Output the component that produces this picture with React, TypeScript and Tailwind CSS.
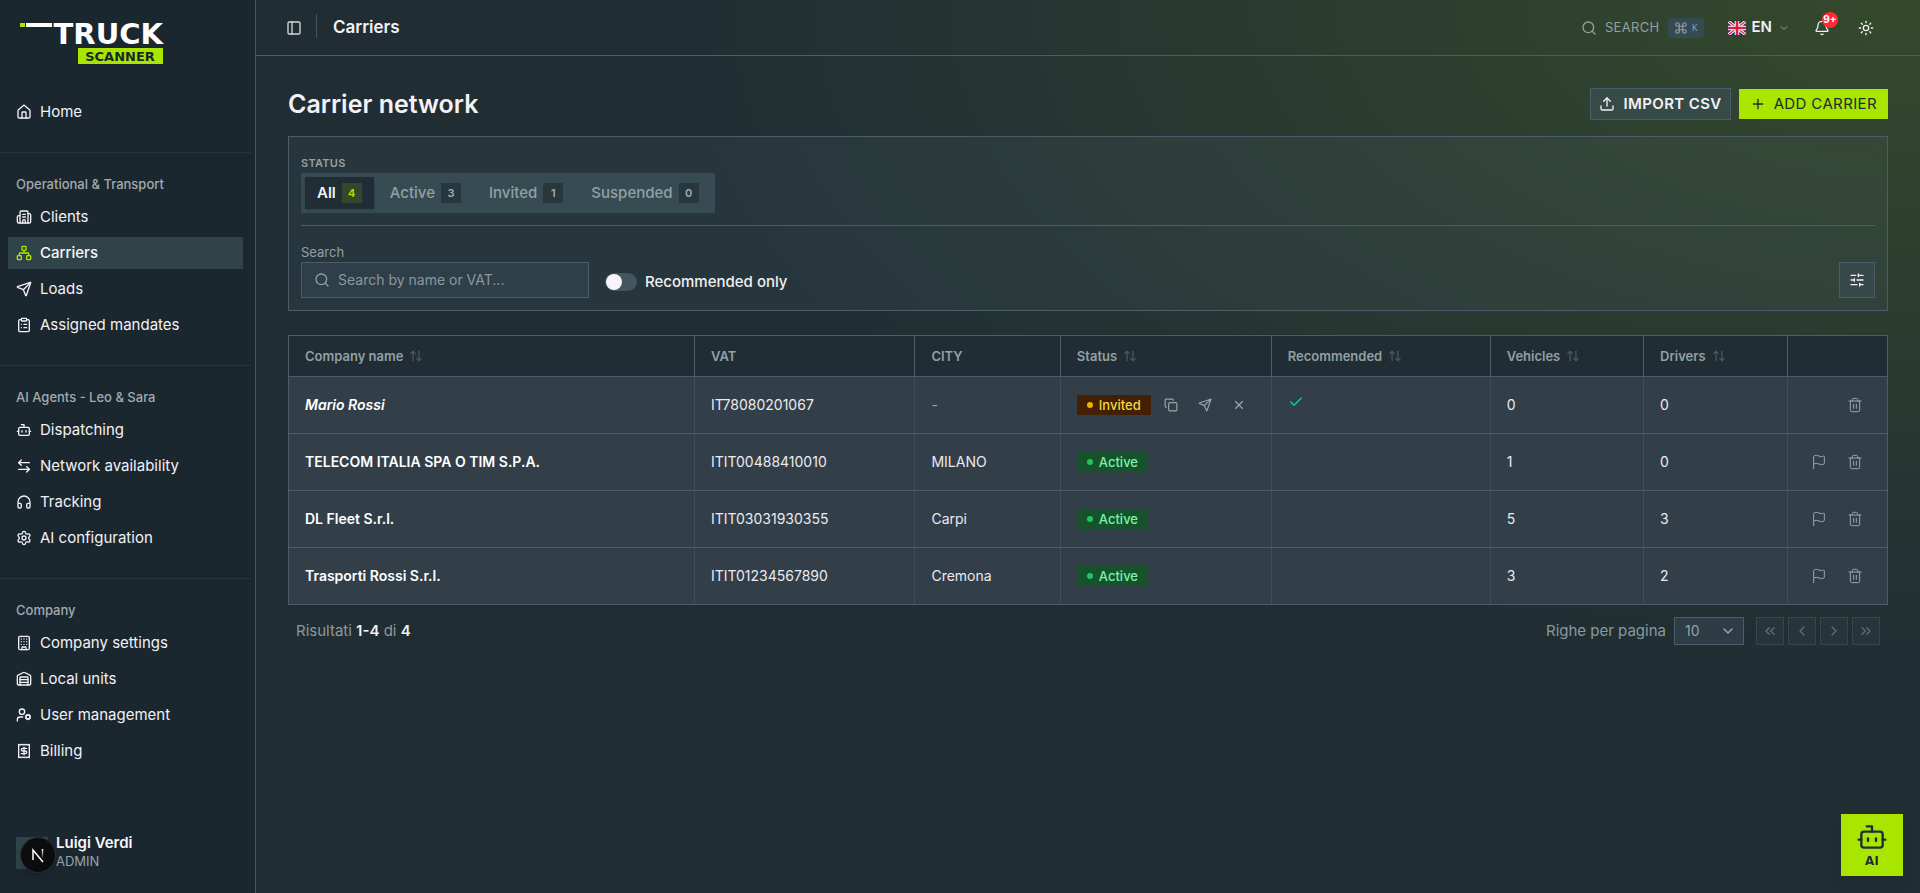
import { useState } from 'react';
import type { ReactNode } from 'react';
import {
    ArrowLeftRight,
    ArrowUpDown,
    Bell,
    Bot,
    Building,
    Building2,
    Check,
    ChevronDown,
    ChevronLeft,
    ChevronRight,
    ChevronsLeft,
    ChevronsRight,
    ClipboardList,
    Command,
    Copy,
    Flag,
    Headphones,
    House,
    Network,
    PanelLeft,
    Plus,
    Receipt,
    Search,
    Send,
    Settings,
    SlidersHorizontal,
    Sun,
    Trash2,
    Upload,
    UserCog,
    Warehouse,
    X,
} from 'lucide-react';
import type { LucideIcon } from 'lucide-react';

interface NavItem {
    label: string;
    icon: LucideIcon;
    active?: boolean;
}

interface NavGroup {
    title?: string;
    items: NavItem[];
}

interface Carrier {
    name: string;
    vat: string;
    city: string;
    status: 'Invited' | 'Active';
    recommended: boolean;
    vehicles: number;
    drivers: number;
}

const NAV: NavGroup[] = [
    { items: [{ label: 'Home', icon: House }] },
    {
        title: 'Operational & Transport',
        items: [
            { label: 'Clients', icon: Building2 },
            { label: 'Carriers', icon: Network, active: true },
            { label: 'Loads', icon: Send },
            { label: 'Assigned mandates', icon: ClipboardList },
        ],
    },
    {
        title: 'AI Agents - Leo & Sara',
        items: [
            { label: 'Dispatching', icon: Bot },
            { label: 'Network availability', icon: ArrowLeftRight },
            { label: 'Tracking', icon: Headphones },
            { label: 'AI configuration', icon: Settings },
        ],
    },
    {
        title: 'Company',
        items: [
            { label: 'Company settings', icon: Building },
            { label: 'Local units', icon: Warehouse },
            { label: 'User management', icon: UserCog },
            { label: 'Billing', icon: Receipt },
        ],
    },
];

const TABS = [
    { label: 'All', count: 4 },
    { label: 'Active', count: 3 },
    { label: 'Invited', count: 1 },
    { label: 'Suspended', count: 0 },
];

const COLUMNS = [
    { label: 'Company name', sortable: true, width: 'w-[25.4%]' },
    { label: 'VAT', sortable: false, width: 'w-[13.8%]' },
    { label: 'CITY', sortable: false, width: 'w-[9.1%]' },
    { label: 'Status', sortable: true, width: 'w-[13.2%]' },
    { label: 'Recommended', sortable: true, width: 'w-[13.7%]' },
    { label: 'Vehicles', sortable: true, width: 'w-[9.6%]' },
    { label: 'Drivers', sortable: true, width: 'w-[9%]' },
    { label: '', sortable: false, width: 'w-[6.2%]' },
];

const CARRIERS: Carrier[] = [
    { name: 'Mario Rossi', vat: 'IT78080201067', city: '-', status: 'Invited', recommended: true, vehicles: 0, drivers: 0 },
    { name: 'TELECOM ITALIA SPA O TIM S.P.A.', vat: 'ITIT00488410010', city: 'MILANO', status: 'Active', recommended: false, vehicles: 1, drivers: 0 },
    { name: 'DL Fleet S.r.l.', vat: 'ITIT03031930355', city: 'Carpi', status: 'Active', recommended: false, vehicles: 5, drivers: 3 },
    { name: 'Trasporti Rossi S.r.l.', vat: 'ITIT01234567890', city: 'Cremona', status: 'Active', recommended: false, vehicles: 3, drivers: 2 },
];

function Logo() {
    return (
        <svg width="147" height="48" viewBox="0 0 147 48" className="block overflow-visible" role="img" aria-label="Truck Scanner">
            <rect x="4" y="7" width="5" height="4" fill="#a8e600" />
            <rect x="10" y="7" width="26" height="4" fill="#fff" />
            <text x="147" y="28" textAnchor="end" fill="#fff" fontFamily="DejaVu Sans, sans-serif" fontWeight="700" fontSize="29">
                TRUCK
            </text>
            <rect x="62" y="32" width="85" height="16" fill="#a8e600" />
            <text x="104" y="45" textAnchor="middle" fill="#1b272f" fontFamily="DejaVu Sans, sans-serif" fontWeight="700" fontSize="13">
                SCANNER
            </text>
        </svg>
    );
}

function Sidebar() {
    return (
        <aside className="flex w-64 shrink-0 flex-col border-r border-[#45565f] bg-[#1b272f]">
            <div className="h-20 px-4 pt-4">
                <Logo />
            </div>
            <nav className="mr-1 flex flex-col">
                {NAV.map((group, i) => (
                    <div
                        key={group.title ?? 'root'}
                        className={i === NAV.length - 1 ? 'px-2 pt-4 pb-6' : 'border-b border-[#27343b] px-2 pt-4 pb-6'}
                    >
                        {group.title && (
                            <h2 className="flex h-8 items-center px-2 text-[13px] font-medium text-[#a3aaae]">{group.title}</h2>
                        )}
                        <ul className="flex flex-col gap-1">
                            {group.items.map(({ label, icon: Icon, active }) => (
                                <li key={label}>
                                    <a
                                        href="#"
                                        className={
                                            active
                                                ? 'flex h-8 items-center gap-2 bg-[#2f4349] px-2 text-[15px] font-medium text-[#f8f6fb]'
                                                : 'flex h-8 items-center gap-2 px-2 text-[15px] text-[#f3f1f6]'
                                        }
                                    >
                                        <Icon className={active ? 'size-4 text-[#a8e600]' : 'size-4'} />
                                        {label}
                                    </a>
                                </li>
                            ))}
                        </ul>
                    </div>
                ))}
            </nav>
            <div className="relative mt-auto flex items-center gap-2 px-4 pb-[22px]">
                <div className="size-8 bg-[#2f4349]" />
                <div className="flex flex-col">
                    <span className="text-[15px] leading-4 font-semibold text-[#f8f6fb]">Luigi Verdi</span>
                    <span className="text-[13px] leading-5 text-[#9aa2a6]">ADMIN</span>
                </div>
                <button
                    type="button"
                    aria-label="Open developer tools"
                    className="absolute bottom-5 left-5 flex size-9 items-center justify-center rounded-full border border-[#2d2f31] bg-[#0a0c0e] shadow-lg"
                >
                    <svg width="16" height="16" viewBox="0 0 16 16" fill="none">
                        <defs>
                            <linearGradient id="fade" x1="0" y1="2" x2="0" y2="12" gradientUnits="userSpaceOnUse">
                                <stop stopColor="#fff" />
                                <stop offset="1" stopColor="#fff" stopOpacity="0" />
                            </linearGradient>
                        </defs>
                        <path d="M3 13V3l10 12" stroke="#fff" strokeWidth="1.5" />
                        <path d="M12.500 2v9" stroke="url(#fade)" strokeWidth="1.5" />
                    </svg>
                </button>
            </div>
        </aside>
    );
}

function UkFlag() {
    return (
        <svg width="18" height="14" viewBox="0 0 18 14">
            <rect width="18" height="14" fill="#1f2f7a" />
            <path d="M0 0 18 14M18 0 0 14" stroke="#fff" strokeWidth="3" />
            <path d="M0 0 18 14M18 0 0 14" stroke="#d8203f" strokeWidth="1.200" />
            <path d="M9 0v14M0 7h18" stroke="#fff" strokeWidth="4.600" />
            <path d="M9 0v14M0 7h18" stroke="#d8203f" strokeWidth="2.600" />
        </svg>
    );
}

function Topbar() {
    return (
        <header className="flex h-14 items-center border-b border-[#4a5d69] pr-[46px] pl-[30px]">
            <button type="button" aria-label="Toggle sidebar" className="text-[#d6d8dc]">
                <PanelLeft className="size-4" />
            </button>
            <div className="mt-[14px] ml-[14px] h-6 w-px self-start bg-[#45565f]" />
            <h1 className="ml-4 text-[17px] font-semibold text-[#f4f1f7]">Carriers</h1>
            <div className="ml-auto flex items-center">
                <button type="button" className="flex items-center text-[#93a0a3]">
                    <Search className="size-4" />
                    <span className="ml-2 text-[13px] tracking-wide">SEARCH</span>
                    <kbd className="ml-2 flex h-5 w-9 items-center justify-center gap-1 rounded bg-[#344a54] font-sans text-[9px] text-[#93a0a3]">
                        <Command className="size-[14px]" />K
                    </kbd>
                </button>
                <button type="button" className="ml-6 flex items-center text-[15px] font-semibold text-[#f1eff4]">
                    <UkFlag />
                    <span className="ml-[6px]">EN</span>
                    <ChevronDown className="ml-[6px] size-3 text-[#93a0a3]" />
                </button>
                <button type="button" aria-label="Notifications" className="relative ml-6 text-[#f1eff4]">
                    <Bell className="size-4" />
                    <span className="absolute -top-2 left-2 flex size-4 items-center justify-center rounded-full bg-[#fb2c36] text-[10px] font-bold text-white">
                        9+
                    </span>
                </button>
                <button type="button" aria-label="Toggle theme" className="ml-7 text-[#f1eff4]">
                    <Sun className="size-4" />
                </button>
            </div>
        </header>
    );
}

function Filters() {
    const [tab, setTab] = useState('All');

    return (
        <section className="border border-[#4a5d69] bg-[#5a7480]/12 p-3">
            <div className="border-b border-[#4a5d69] pt-1 pb-3">
                <h3 className="text-[11px] leading-5 font-semibold tracking-wide text-[#93a0a3]">STATUS</h3>
                <div className="flex h-10 w-fit gap-1 bg-[#364c52] p-1">
                    {TABS.map(({ label, count }) => {
                        const on = tab === label;
                        return (
                            <button
                                key={label}
                                type="button"
                                onClick={() => setTab(label)}
                                className={
                                    on
                                        ? 'flex items-center gap-[6px] bg-[#202d34] px-3 text-[15px] font-semibold text-[#f4f1f7] shadow-sm'
                                        : 'flex items-center gap-[6px] px-3 text-[15px] font-medium text-[#93a0a3]'
                                }
                            >
                                {label}
                                <span
                                    className={
                                        on
                                            ? 'flex size-5 items-center justify-center bg-[#35462c] text-[11px] font-semibold text-[#a8e600]'
                                            : 'flex size-5 items-center justify-center bg-[#28373e] text-[11px] font-semibold text-[#a3adb0]'
                                    }
                                >
                                    {count}
                                </span>
                            </button>
                        );
                    })}
                </div>
            </div>
            <div className="flex items-end justify-between pt-4">
                <div className="flex items-end gap-4">
                    <div className="flex w-72 flex-col">
                        <label htmlFor="carrier-search" className="text-[13px] leading-5 text-[#93a0a3]">
                            Search
                        </label>
                        <div className="flex h-9 items-center gap-2 border border-[#4a5d69] bg-[#2f3f49] px-3">
                            <Search className="size-4 shrink-0 text-[#93a0a3]" />
                            <input
                                id="carrier-search"
                                type="text"
                                placeholder="Search by name or VAT..."
                                className="min-w-0 flex-1 bg-transparent text-sm text-[#f4f1f7] outline-none placeholder:text-[#8b989d]"
                            />
                        </div>
                    </div>
                    <label className="flex h-8 items-center gap-2 text-[15px] font-medium text-[#f1eff4]">
                        <input
                            type="checkbox"
                            role="switch"
                            className="flex h-[18px] w-8 appearance-none items-center rounded-full bg-[#43555f] px-px before:size-4 before:rounded-full before:bg-[#f8f4fb] checked:justify-end checked:bg-[#a8e600]"
                        />
                        Recommended only
                    </label>
                </div>
                <button
                    type="button"
                    aria-label="Table options"
                    className="flex size-9 items-center justify-center border border-[#4a5d69] bg-[#364848] text-[#f1eff4]"
                >
                    <SlidersHorizontal className="size-4" />
                </button>
            </div>
        </section>
    );
}

function StatusBadge({ status }: { status: Carrier['status'] }) {
    return status === 'Invited' ? (
        <span className="flex h-5 items-center gap-[6px] bg-[#432004] px-[10px] text-[13px] font-medium text-[#f5d63a]">
            <span className="size-[6px] rounded-full bg-[#f0b100]" />
            Invited
        </span>
    ) : (
        <span className="flex h-5 items-center gap-[6px] bg-[#16532d] px-[10px] text-[13px] font-medium text-[#7bf1a8]">
            <span className="size-[6px] rounded-full bg-[#22c55e]" />
            Active
        </span>
    );
}

function IconButton({ label, children }: { label: string; children: ReactNode }) {
    return (
        <button type="button" aria-label={label} className="flex size-7 items-center justify-center text-[#9aa6ab]">
            {children}
        </button>
    );
}

function CarrierTable() {
    return (
        <div className="mt-6 border border-[#4a5d69]">
            <table className="w-full table-fixed border-separate border-spacing-0 text-left text-sm">
                <thead className="bg-[#202d34]">
                    <tr>
                        {COLUMNS.map(({ label, sortable, width }) => (
                            <th
                                key={label}
                                className={`${width} h-[41px] border-r border-b border-[#4a5d69] px-4 text-[13px] font-semibold text-[#93a0a3] last:border-r-0`}
                            >
                                <span className="flex items-center gap-[6px]">
                                    {label}
                                    {sortable && <ArrowUpDown className="size-[14px] text-[#4d5b62]" />}
                                </span>
                            </th>
                        ))}
                    </tr>
                </thead>
                <tbody className="bg-[#323f49] text-[#eceaf0] [&_td]:h-[57px] [&_td]:border-r [&_td]:border-b [&_td]:border-r-[#3f4f59] [&_td]:border-b-[#4a5d69] [&_td]:px-4 [&_td:last-child]:border-r-0 [&_tr:last-child_td]:h-14 [&_tr:last-child_td]:border-b-0">
                    {CARRIERS.map((c) => {
                        const invited = c.status === 'Invited';
                        return (
                            <tr key={c.vat}>
                                <td className={invited ? 'font-semibold text-white italic' : 'font-semibold text-white'}>{c.name}</td>
                                <td>{c.vat}</td>
                                <td className={c.city === '-' ? 'text-[#93a0a3]' : ''}>{c.city}</td>
                                <td>
                                    <div className="flex items-center gap-[6px]">
                                        <StatusBadge status={c.status} />
                                        {invited && (
                                            <>
                                                <IconButton label="Copy invite link">
                                                    <Copy className="size-[14px]" />
                                                </IconButton>
                                                <IconButton label="Resend invite">
                                                    <Send className="size-[14px]" />
                                                </IconButton>
                                                <IconButton label="Cancel invite">
                                                    <X className="size-[14px]" />
                                                </IconButton>
                                            </>
                                        )}
                                    </div>
                                </td>
                                <td>{c.recommended && <Check className="mb-[6px] size-4 text-[#00d492]" />}</td>
                                <td>{c.vehicles}</td>
                                <td>{c.drivers}</td>
                                <td>
                                    <div className="flex justify-end gap-2 pr-[2px]">
                                        {!invited && (
                                            <IconButton label="Flag carrier">
                                                <Flag className="size-4" strokeWidth={1.5} />
                                            </IconButton>
                                        )}
                                        <IconButton label="Delete carrier">
                                            <Trash2 className="size-4" strokeWidth={1.5} />
                                        </IconButton>
                                    </div>
                                </td>
                            </tr>
                        );
                    })}
                </tbody>
            </table>
        </div>
    );
}

function Pagination() {
    const pages = [
        { label: 'First page', icon: ChevronsLeft },
        { label: 'Previous page', icon: ChevronLeft },
        { label: 'Next page', icon: ChevronRight },
        { label: 'Last page', icon: ChevronsRight },
    ];

    return (
        <div className="mt-3 flex items-center justify-between px-2 text-[15px] text-[#8b989d]">
            <p>
                Risultati <span className="font-semibold text-[#f1eff4]">1-4</span> di{' '}
                <span className="font-semibold text-[#f1eff4]">4</span>
            </p>
            <div className="flex items-center">
                <label htmlFor="page-size">Righe per pagina</label>
                <div className="relative ml-2">
                    <select
                        id="page-size"
                        className="block h-7 w-[70px] appearance-none border border-[#4a5d69] bg-[#2d3c45] px-[10px] text-sm text-[#93a0a3]"
                    >
                        <option>10</option>
                        <option>25</option>
                        <option>50</option>
                    </select>
                    <ChevronDown className="pointer-events-none absolute top-[6px] right-2 size-4 text-[#a3adb0]" />
                </div>
                <div className="ml-3 flex gap-1">
                    {pages.map(({ label, icon: Icon }) => (
                        <button
                            key={label}
                            type="button"
                            disabled
                            aria-label={label}
                            className="flex size-7 items-center justify-center border border-[#36464f] bg-[#27343c] text-[#5f6d74]"
                        >
                            <Icon className="size-4" />
                        </button>
                    ))}
                </div>
            </div>
        </div>
    );
}

export default function App() {
    return (
        <div className="flex min-h-screen bg-[#202e34] font-['Inter',sans-serif] text-[#f4f1f7]">
            <Sidebar />
            <div className="min-w-0 flex-1 bg-[radial-gradient(ellipse_75%_75%_at_100%_0%,#354a2c_0%,#2c3d30_42%,#202e34_100%)]">
                <Topbar />
                <main className="px-8 pt-8">
                    <div className="mb-4 flex items-center justify-between">
                        <h2 className="text-[25px] leading-8 font-semibold">Carrier network</h2>
                        <div className="flex items-center gap-2">
                            <button
                                type="button"
                                className="flex h-8 items-center gap-2 border border-[#4a5d69] bg-[#364a46] px-2 text-[15px] font-semibold tracking-wide"
                            >
                                <Upload className="size-4" />
                                IMPORT CSV
                            </button>
                            <button
                                type="button"
                                className="flex h-[30px] items-center gap-2 bg-[#a8e600] px-[11px] text-[15px] tracking-wide text-[#212e35]"
                            >
                                <Plus className="size-4" />
                                ADD CARRIER
                            </button>
                        </div>
                    </div>
                    <Filters />
                    <CarrierTable />
                    <Pagination />
                </main>
            </div>
            {/* Assistant launcher */}
            <button
                type="button"
                className="fixed right-[17px] bottom-[17px] flex size-[62px] flex-col items-center justify-center bg-[#a8e600] text-[#212e35] shadow-lg"
            >
                <Bot className="size-8" strokeWidth={1.75} />
                <span className="font-['DejaVu_Sans',sans-serif] text-xs leading-4 font-bold">AI</span>
            </button>
        </div>
    );
}
